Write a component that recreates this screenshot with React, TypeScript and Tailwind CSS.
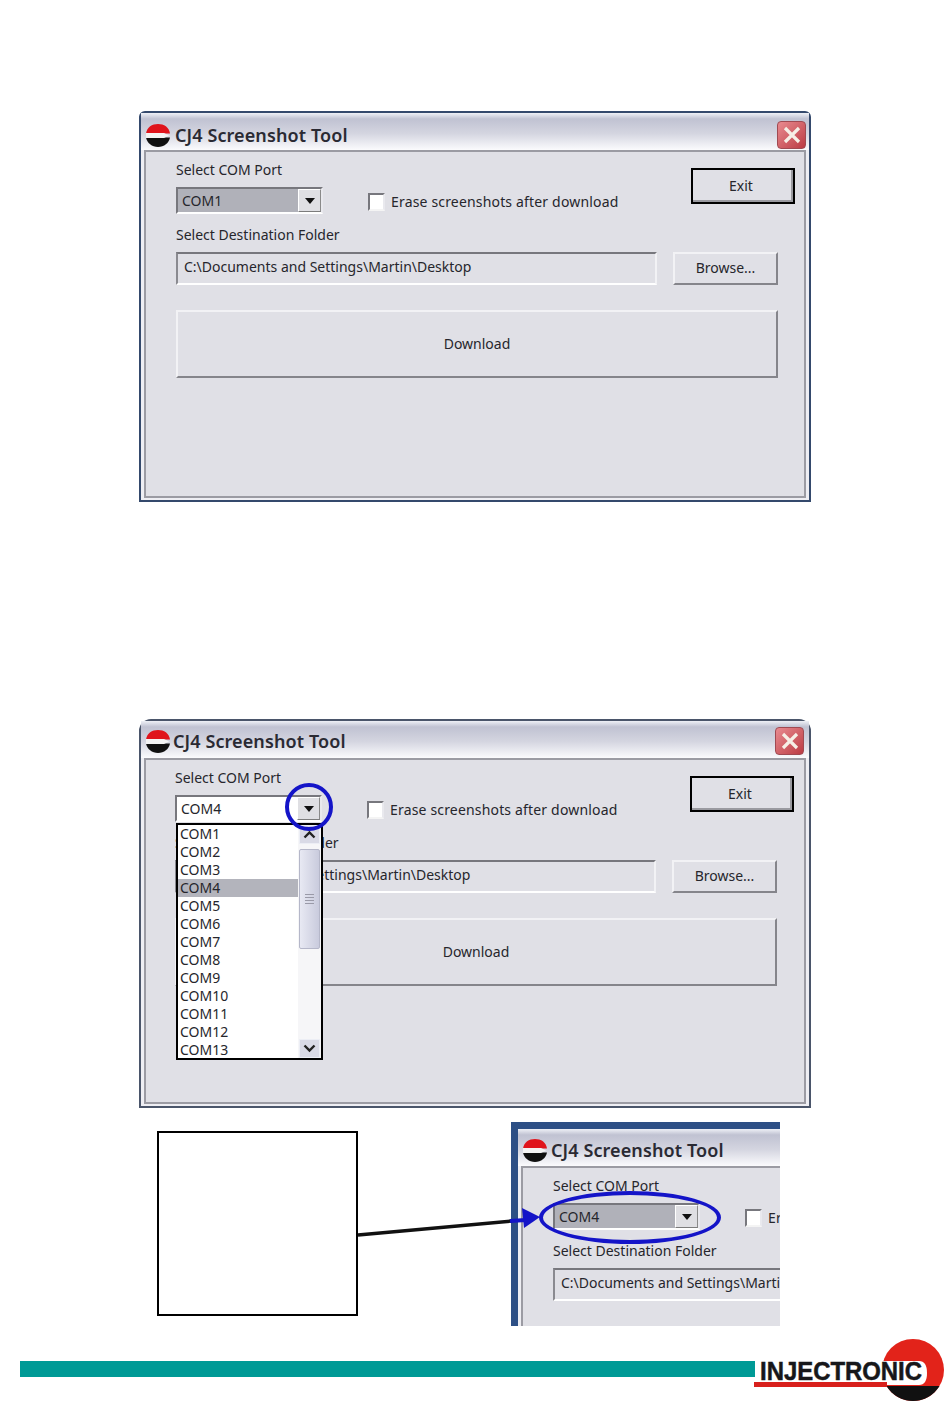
const uiFont = "font-['Noto_Sans',sans-serif] text-[14px] leading-none text-[#26262c]";

const ports = ["COM1", "COM2", "COM3", "COM4", "COM5", "COM6", "COM7", "COM8", "COM9", "COM10", "COM11", "COM12", "COM13"];

const AppIcon = () => (
  <svg width="26" height="26" viewBox="0 0 26 26" className="shrink-0">
    <path d="M1 11.5C2 5 7 2 13 2s11 3 12 9.5z" fill="#e0141c" />
    <path d="M1 15.5C2 21 7 25 13 25s11-4 12-9.5z" fill="#111" />
    <path d="M1 11h18l5 2.5-5 2.5H1z" fill="#f4f4f4" />
  </svg>
);

const CloseButton = () => (
  <div className="w-[29px] h-[28px] rounded-[4px] border border-[#a04a52] bg-gradient-to-br from-[#e88a90] to-[#bb3a44] flex items-center justify-center">
    <svg width="20" height="18" viewBox="0 0 20 18">
      <path d="M3 2l14 14M17 2L3 16" stroke="#f6efe6" strokeWidth="3.2" />
    </svg>
  </div>
);

const ArrowButton = () => (
  <div className="w-[23px] h-[23px] bg-[#dfdfe3] border border-t-white border-l-white border-r-[#8a8a8a] border-b-[#7c7c7c] flex items-center justify-center">
    <svg width="10" height="6" viewBox="0 0 10 6">
      <path d="M0 0h10L5 6z" fill="#111" />
    </svg>
  </div>
);

const ScrollArrow = ({ up }: { up?: boolean }) => (
  <div className="w-[21px] h-[19px] bg-[#d9dae6] border border-[#eceef5] flex items-center justify-center">
    <svg width="13" height="9" viewBox="0 0 13 9">
      <path d={up ? "M1.5 7.5l5-5 5 5" : "M1.5 1.5l5 5 5-5"} fill="none" stroke="#222" strokeWidth="2.4" />
    </svg>
  </div>
);

const PortList = () => (
  <div className="absolute left-[30px] top-[63px] w-[147px] h-[237px] z-10 bg-white border-2 border-black flex">
    <div className="flex-1">
      {ports.map((port) => (
        <div
          key={port}
          className={`h-[18px] pl-[2px] flex items-center ${uiFont} ${port === "COM4" ? "bg-[#b3b4bc]" : ""}`}
        >
          {port}
        </div>
      ))}
    </div>
    <div className="w-[23px] flex flex-col justify-between bg-[#f6f6f8] pl-[1px]">
      <div>
        <ScrollArrow up />
        <div className="w-[21px] h-[100px] mt-[5px] rounded-[2px] bg-gradient-to-r from-[#e8e9f3] to-[#c9cbdd] border border-[#b5b7c9] flex flex-col items-center justify-center gap-[2px]">
          <div className="w-[9px] h-[1px] bg-[#9a9aa8]" />
          <div className="w-[9px] h-[1px] bg-[#9a9aa8]" />
          <div className="w-[9px] h-[1px] bg-[#9a9aa8]" />
          <div className="w-[9px] h-[1px] bg-[#9a9aa8]" />
        </div>
      </div>
      <ScrollArrow />
    </div>
  </div>
);

type ToolWindowProps = {
  port: string;
  comboClass: string;
  frameClass: string;
  heightClass: string;
  bodyClass: string;
  titleClass: string;
  open?: boolean;
};

const ToolWindow = ({ port, comboClass, frameClass, heightClass, bodyClass, titleClass, open }: ToolWindowProps) => (
  <div className={`relative w-[672px] shrink-0 flex flex-col bg-[#eeeef3] ${frameClass} ${heightClass}`}>
    <div className={`h-[37px] shrink-0 flex items-center pl-[4px] bg-[linear-gradient(to_bottom,#eef0f6_0%,#c0c2d2_16%,#d4d5e0_55%,#fbfbfd_100%)] ${titleClass}`}>
      <AppIcon />
      <div className="font-['Noto_Sans',sans-serif] font-semibold text-[18px] leading-none text-[#2a2a33] tracking-[0.1px]">CJ4 Screenshot Tool</div>
      <div className="ml-auto">
        <CloseButton />
      </div>
    </div>
    <div className={`relative flex-1 min-h-0 mx-[3px] mb-[2px] border-2 border-[#9b9ba3] bg-[#e0e0e6] pt-[10px] ${bodyClass}`}>
      <div className="flex h-[52px]">
        <div className="w-[147px] shrink-0">
          <div className={`h-[15px] flex items-center ${uiFont}`}>Select COM Port</div>
          <div className="mt-[10px] h-[27px] flex items-center justify-between border-2 border-t-[#77777d] border-l-[#77777d] border-r-[#e9e9ee] border-b-white bg-white">
            <div className={`flex-1 h-full flex items-center pl-[4px] ${uiFont} ${comboClass}`}>{port}</div>
            <ArrowButton />
          </div>
        </div>
        <div className="ml-[45px] mt-[31px] flex h-[18px] items-center gap-[6px]">
          <div className="w-[17px] h-[18px] bg-white border-2 border-t-[#77777d] border-l-[#77777d] border-r-[#e9e9ee] border-b-[#f4f4f4]" />
          <div className={`${uiFont} tracking-[0.17px]`}>Erase screenshots after download</div>
        </div>
        <div className={`ml-auto mr-[-17px] mt-[6px] w-[104px] h-[36px] pr-[4px] flex items-center justify-center border-2 border-black shadow-[inset_-2px_-2px_0_#9a9aa0] ${uiFont}`}>Exit</div>
      </div>
      <div className={`mt-[13px] h-[16px] flex items-center ${uiFont}`}>Select Destination Folder</div>
      <div className="mt-[9px] flex h-[33px] gap-[16px]">
        <div className={`flex-1 flex items-center pl-[6px] pb-[4px] border-2 border-t-[#77777d] border-l-[#8a8a90] border-r-[#f2f2f5] border-b-white ${uiFont}`}>C:\Documents and Settings\Martin\Desktop</div>
        <div className={`w-[105px] flex items-center justify-center pb-[2px] border-2 border-t-[#f2f2f5] border-l-[#f2f2f5] border-r-[#85858b] border-b-[#85858b] ${uiFont}`}>Browse...</div>
      </div>
      <div className={`mt-[25px] h-[68px] flex items-center justify-center border-2 border-t-[#f2f2f5] border-l-[#f2f2f5] border-r-[#85858b] border-b-[#85858b] ${uiFont}`}>Download</div>
      {open && <PortList />}
    </div>
  </div>
);

const Logo = () => (
  <svg width="196" height="72" viewBox="0 0 196 72" className="shrink-0">
    <circle cx="159" cy="32" r="31" fill="#e2231a" />
    <path d="M132.5 48A31 31 0 0 0 185.5 48z" fill="#111" />
    <path d="M122 23h43q8 0 8 12t-8 12h-43z" fill="#fff" />
    <rect x="0" y="44" width="133" height="5" fill="#d8201c" />
    <text x="6" y="42" fontFamily="Liberation Sans, sans-serif" fontWeight="700" fontSize="25" textLength="162" lengthAdjust="spacingAndGlyphs" fill="#17171a" stroke="#17171a" strokeWidth="0.5">INJECTRONIC</text>
  </svg>
);

export default function App() {
  return (
    <div className="w-[950px] h-[1411px] bg-white flex flex-col overflow-hidden">
      <div className="pl-[139px] pt-[111px]">
        <ToolWindow
          port="COM1"
          comboClass="bg-[#b0b1b9]"
          frameClass="border-2 border-[#34496c] rounded-t-[6px]"
          heightClass="h-[391px]"
          bodyClass="pl-[30px] pr-[26px]"
          titleClass="gap-[4px] pr-[3px] pt-[6px]"
        />
      </div>
      <div className="pl-[139px] pt-[217px] relative">
        <ToolWindow
          port="COM4"
          comboClass="bg-white"
          frameClass="border-2 border-[#4a556a] rounded-t-[12px]"
          heightClass="h-[389px]"
          bodyClass="pl-[29px] pr-[27px]"
          titleClass="gap-[2px] pr-[5px] pt-[2px]"
          open
        />
        <div className="absolute left-[285px] top-[281px] w-[48px] h-[48px] z-20 rounded-full border-4 border-[#1414c8]" />
      </div>
      <div className="relative flex pl-[157px] pt-[14px] h-[218px]">
        <div className="mt-[9px] w-[201px] h-[185px] border-2 border-black bg-white" />
        <div className="relative ml-[153px] w-[269px] h-[204px] overflow-hidden bg-[#2d4f85] pl-[7px] pt-[7px]">
          <ToolWindow
            port="COM4"
            comboClass="bg-[#b0b1b9]"
            frameClass="rounded-t-[8px]"
            heightClass="h-[391px]"
            bodyClass="pl-[30px] pr-[26px]"
            titleClass="gap-[3px] pr-[3px] pt-[4px]"
          />
        </div>
        <svg width="400" height="120" viewBox="0 0 400 120" className="absolute left-[350px] top-[40px] z-20">
          <path d="M8 87L162 73" stroke="#111" strokeWidth="3.5" fill="none" />
          <path d="M160 73L176 72" stroke="#1414c8" strokeWidth="4" fill="none" />
          <path d="M172 60L190 69L174 80z" fill="#1414c8" />
        </svg>
        <div className="absolute left-[539px] top-[83px] w-[182px] h-[53px] z-20 rounded-[50%] border-4 border-[#1414c8]" />
      </div>
      <div className="relative mt-[35px] ml-[20px] h-[16px] w-[735px] bg-[#009a96]">
        <div className="absolute left-[734px] top-[-23px]">
          <Logo />
        </div>
      </div>
    </div>
  );
}
